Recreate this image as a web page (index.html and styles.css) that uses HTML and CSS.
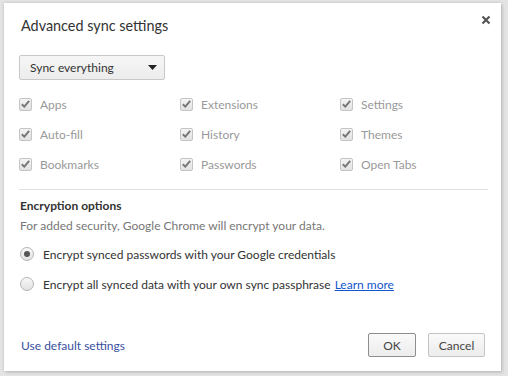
FILE: index.html
```html
<!DOCTYPE html>
<html>
<head>
<meta charset="utf-8">
<link rel="stylesheet" href="styles.css">
</head>
<body>
<div class="dialog">
  <div class="header">
    <h1 class="title">Advanced sync settings</h1>
    <span class="close" aria-label="Close">
      <svg width="10" height="10" viewBox="0 0 10 10"><path d="M1.5 1.5 L8.5 8.5 M8.5 1.5 L1.5 8.5" stroke="#555" stroke-width="2.2" stroke-linecap="butt"/></svg>
    </span>
  </div>
  <div class="select">
    <span>Sync everything</span>
    <svg class="arrow" width="9" height="5" viewBox="0 0 9 5"><path d="M0 0 H9 L4.5 5 Z" fill="#222"/></svg>
  </div>
  <div class="types">
    <label class="cb"><span class="box"><svg width="9" height="8" viewBox="0 0 9 8"><path d="M0.8 4.2 L3.3 6.6 L8.2 0.8" fill="none" stroke="#777" stroke-width="2"/></svg></span>Apps</label>
    <label class="cb"><span class="box"><svg width="9" height="8" viewBox="0 0 9 8"><path d="M0.8 4.2 L3.3 6.6 L8.2 0.8" fill="none" stroke="#777" stroke-width="2"/></svg></span>Extensions</label>
    <label class="cb"><span class="box"><svg width="9" height="8" viewBox="0 0 9 8"><path d="M0.8 4.2 L3.3 6.6 L8.2 0.8" fill="none" stroke="#777" stroke-width="2"/></svg></span>Settings</label>
    <label class="cb"><span class="box"><svg width="9" height="8" viewBox="0 0 9 8"><path d="M0.8 4.2 L3.3 6.6 L8.2 0.8" fill="none" stroke="#777" stroke-width="2"/></svg></span>Auto-fill</label>
    <label class="cb"><span class="box"><svg width="9" height="8" viewBox="0 0 9 8"><path d="M0.8 4.2 L3.3 6.6 L8.2 0.8" fill="none" stroke="#777" stroke-width="2"/></svg></span>History</label>
    <label class="cb"><span class="box"><svg width="9" height="8" viewBox="0 0 9 8"><path d="M0.8 4.2 L3.3 6.6 L8.2 0.8" fill="none" stroke="#777" stroke-width="2"/></svg></span>Themes</label>
    <label class="cb"><span class="box"><svg width="9" height="8" viewBox="0 0 9 8"><path d="M0.8 4.2 L3.3 6.6 L8.2 0.8" fill="none" stroke="#777" stroke-width="2"/></svg></span>Bookmarks</label>
    <label class="cb"><span class="box"><svg width="9" height="8" viewBox="0 0 9 8"><path d="M0.8 4.2 L3.3 6.6 L8.2 0.8" fill="none" stroke="#777" stroke-width="2"/></svg></span>Passwords</label>
    <label class="cb"><span class="box"><svg width="9" height="8" viewBox="0 0 9 8"><path d="M0.8 4.2 L3.3 6.6 L8.2 0.8" fill="none" stroke="#777" stroke-width="2"/></svg></span>Open Tabs</label>
  </div>
  <hr class="sep">
  <h2 class="section">Encryption options</h2>
  <p class="desc">For added security, Google Chrome will encrypt your data.</p>
  <label class="radio first"><span class="dot checked"></span>Encrypt synced passwords with your Google credentials</label>
  <label class="radio"><span class="dot"></span>Encrypt all synced data with your own sync passphrase <a class="learn" href="#">Learn more</a></label>
  <div class="footer">
    <a class="default" href="#">Use default settings</a>
    <div class="buttons">
      <button class="btn ok">OK</button>
      <button class="btn cancel">Cancel</button>
    </div>
  </div>
</div>
</body>
</html>
```
FILE: styles.css
```css
html, body {
  margin: 0;
  padding: 0;
}
body {
  background: #e4e4e4;
  width: 508px;
  height: 376px;
  overflow: hidden;
  font-family: "Lato", "Open Sans", sans-serif;
  font-size: 12px;
  color: #333;
}
.dialog {
  box-sizing: border-box;
  margin: 3px 0 0 4px;
  width: 497px;
  height: 368px;
  background: #fff;
  box-shadow: 0 0 3px rgba(0,0,0,0.18), 2px 2px 3px rgba(0,0,0,0.1);
  padding: 0 13px 0 15px;
  display: flex;
  flex-direction: column;
}
.header {
  display: flex;
  justify-content: space-between;
  align-items: flex-start;
  height: 52px;
}
.title {
  margin: 13px 0 0 2px;
  font-size: 14.4px;
  font-weight: normal;
  line-height: 20px;
  color: #333;
}
.close {
  margin: 12px -3px 0 0;
  display: block;
  width: 10px;
  height: 10px;
}
.close svg { display: block; }
.select {
  box-sizing: border-box;
  width: 146px;
  height: 25px;
  border: 1px solid #c8c8c8;
  border-radius: 2px;
  background: linear-gradient(#f6f6f6, #ececec);
  display: flex;
  align-items: center;
  justify-content: space-between;
  padding: 0 7px 0 10px;
  color: #333;
}
.arrow { display: block; }
.types {
  margin-top: 9px;
  display: grid;
  grid-template-columns: 161px 160px 1fr;
  grid-auto-rows: 30px;
}
.cb {
  display: flex;
  align-items: center;
  color: #999;
}
.box {
  box-sizing: border-box;
  width: 13px;
  height: 13px;
  border: 1px solid #c4c4c4;
  border-radius: 2px;
  background: linear-gradient(#f4f4f4, #e2e2e2);
  margin-right: 8px;
  display: flex;
  align-items: center;
  justify-content: center;
}
.box svg { display: block; }
.sep {
  margin: 10px 0 0 0;
  border: 0;
  border-top: 1px solid #e0e0e0;
  height: 0;
}
.section {
  margin: 7px 0 0 1px;
  font-size: 12px;
  font-weight: bold;
  line-height: 18px;
  color: #333;
}
.desc {
  margin: 2px 0 0 1px;
  line-height: 18px;
  color: #777;
}
.radio {
  display: flex;
  align-items: center;
  height: 30px;
  color: #333;
  margin-left: 1px;
}
.radio.first { margin-top: 4px; }
.dot {
  box-sizing: border-box;
  width: 14px;
  height: 14px;
  border-radius: 50%;
  border: 1px solid #b4b4b4;
  background: linear-gradient(#f8f8f8, #e2e2e2);
  margin-right: 9px;
  display: flex;
  align-items: center;
  justify-content: center;
}
.dot.checked::after {
  content: "";
  width: 6px;
  height: 6px;
  border-radius: 50%;
  background: #555;
}
.learn {
  color: #15c;
  margin-left: 4px;
}
.footer {
  margin-top: auto;
  margin-bottom: 14px;
  display: flex;
  align-items: center;
  justify-content: space-between;
  margin-right: 3px;
}
.default {
  color: #3a4fa0;
  text-decoration: none;
  margin-left: 2px;
}
.buttons {
  display: flex;
  gap: 12px;
}
.btn {
  box-sizing: border-box;
  height: 24px;
  padding: 0;
  font-family: inherit;
  font-size: 12px;
  color: #444;
  border: 1px solid #c4c4c4;
  border-radius: 2px;
  background: linear-gradient(#fafafa, #ececec);
}
.btn.ok {
  width: 48px;
  border-color: #8e8e8e;
}
.btn.cancel {
  width: 57px;
}
```
